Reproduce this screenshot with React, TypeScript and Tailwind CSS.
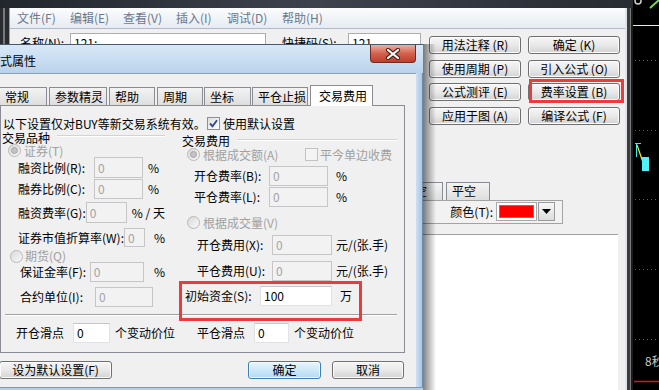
import React from 'react'

const txt = 'text-[12px] leading-[14px] whitespace-nowrap'
const tight = 'text-[12px] leading-[12px] whitespace-nowrap'

function Btn({ label, className = '', primary = false }: { label: string; className?: string; primary?: boolean }) {
  return (
    <div
      className={`flex h-[18px] items-center justify-center rounded-[3px] border text-black ${txt} ${
        primary
          ? 'border-[#3c7fb1] bg-linear-to-b from-[#e8f5fd] to-[#b2dbf4] shadow-[inset_0_0_0_1px_#f4fbff]'
          : 'border-[#707070] bg-linear-to-b from-[#f6f6f6] via-[#e9e9e9] to-[#d3d3d3] shadow-[inset_0_0_0_1px_#fbfbfb]'
      } ${className}`}
    >
      {label}
    </div>
  )
}

function Field({ value = '0', enabled = false, className = '' }: { value?: string; enabled?: boolean; className?: string }) {
  return (
    <div
      className={`flex h-full items-center border pl-[3px] ${txt} ${
        enabled ? 'border-[#dfe3e8] border-t-[#c3c7cc] bg-white text-black' : 'border-[#c6c6c6] bg-[#f2f2f2] text-[#a3a3a3]'
      } ${className}`}
    >
      {value}
    </div>
  )
}

function Radio({ checked = false }: { checked?: boolean }) {
  return (
    <span className="flex h-[13px] w-[13px] shrink-0 items-center justify-center rounded-full border border-[#b8b8b8] bg-linear-to-br from-[#d9d9d9] to-[#f9f9f9]">
      {checked && <span className="h-[7px] w-[7px] rounded-full border border-[#a5a5a5] bg-[#c4c4c4]" />}
    </span>
  )
}

function Check({ checked = false, disabled = false }: { checked?: boolean; disabled?: boolean }) {
  return (
    <span
      className={`flex h-[13px] w-[13px] shrink-0 items-center justify-center border ${
        disabled ? 'border-[#c2c2c2] bg-[#f4f4f4]' : 'border-[#8e8f8f] bg-linear-to-br from-[#dedede] to-white'
      }`}
    >
      {checked && (
        <svg width="9" height="9" viewBox="0 0 9 9">
          <path d="M1 4.5 L3.5 7.2 L8 1.2" fill="none" stroke="#2f4a8f" strokeWidth="1.9" />
        </svg>
      )}
    </span>
  )
}

function Tab({ label, w, ml = 0, active = false }: { label: string; w: number; ml?: number; active?: boolean }) {
  return (
    <div
      style={{ width: w, marginLeft: ml }}
      className={`flex items-center border border-b-0 border-[#898c95] text-black ${txt} ${
        active ? 'relative z-10 mb-[-1px] h-[21px] bg-white pl-[8px]' : 'h-[18px] bg-linear-to-b from-[#f3f3f3] to-[#dedede] pl-[5px]'
      }`}
    >
      {label}
    </div>
  )
}

function BackWindow() {
  const menu: [string, number][] = [
    ['文件(F)', 53],
    ['编辑(E)', 53],
    ['查看(V)', 53],
    ['插入(I)', 51],
    ['调试(D)', 55],
    ['帮助(H)', 60],
  ]
  const buttons = ['用法注释 (R)', '确定 (K)', '使用周期 (P)', '引入公式 (O)', '公式测评 (E)', '费率设置 (B)', '应用于图 (A)', '编译公式 (F)']
  return (
    <div className="flex h-[390px] w-[633px] shrink-0 flex-col">
      <div className="h-[8px] bg-linear-to-r from-[#22262d] via-[#3d434d] to-[#272b32]" />
      <div className="flex flex-1">
        <div className="flex w-[10px] bg-[#2a2c30]">
          <div className="ml-[3px] w-[2px] bg-[#777a7f]" />
          <div className="ml-[4px] w-[1px] bg-[#9aa0a8]" />
        </div>
        <div className="flex w-[615px] flex-col bg-[#f0f0f0]">
          <div className="flex h-[21px] items-center border-b border-[#b3bac5] bg-linear-to-b from-[#fbfcfd] to-[#e6ecf3] pl-[7px] text-[#6b778d]">
            {menu.map(([m, w]) => (
              <div key={m} style={{ width: w }} className={txt}>
                {m}
              </div>
            ))}
          </div>
          <div className="flex pt-[4px]">
            <div className="flex w-[411px] items-start">
              <div className={`w-[60px] pl-[10px] pt-[3px] ${txt}`}>名称(N):</div>
              <div className={`h-[20px] w-[196px] border border-[#abadb3] bg-white pl-[3px] pt-[2px] ${txt}`}>121:</div>
              <div className={`ml-[16px] w-[66px] pt-[3px] ${txt}`}>快捷码(S):</div>
              <div className={`h-[20px] w-[73px] border border-[#abadb3] bg-white pl-[3px] pt-[2px] ${txt}`}>121</div>
            </div>
            <div className="ml-[8px] mt-[3px] grid grid-cols-[92px_92px] gap-x-[7px] gap-y-[5.67px]">
              {buttons.map((b) =>
                b === '费率设置 (B)' ? (
                  <div key={b} className="relative">
                    <Btn label={b} />
                    <div className="absolute left-[1px] top-[-4px] h-[24px] w-[95px] border-[3px] border-[#ec3b3b]" />
                  </div>
                ) : (
                  <Btn key={b} label={b} />
                )
              )}
            </div>
          </div>
          <div className="mt-[57px] flex items-end pl-[387px]">
            <Tab label="开空" w={46} />
            <Tab label="平空" w={44} ml={3} />
          </div>
          <div className="ml-[380px] flex h-[24px] w-[173px] items-center justify-end border border-[#a3a3a3] bg-[#f2f2f2] pr-[7px]">
            <div className={`mr-[3px] ${txt}`}>颜色(T):</div>
            <div className="h-[19px] w-[41px] border border-[#a9a9a9] bg-white p-[2px]">
              <div className="h-full w-full border border-[#7a7a7a] bg-[#ff0000]" />
            </div>
            <div className="ml-[1px] flex h-[19px] w-[17px] items-center justify-center border border-[#9a9a9a] bg-linear-to-b from-[#f7f7f7] to-[#dcdcdc]">
              <svg width="9" height="5" viewBox="0 0 9 5">
                <path d="M0 0 H9 L4.5 5 Z" fill="#000" />
              </svg>
            </div>
          </div>
          <div className="mr-[7px] mt-[10px] flex-1 border-t border-[#a0a0a0] bg-white" />
        </div>
        <div className="flex w-[8px]">
          <div className="w-[2px] bg-[#dfe3ea]" />
          <div className="w-[3px] bg-[#3c3c3c]" />
          <div className="w-[1px] bg-[#7a7a7a]" />
          <div className="w-[2px] bg-[#1b1b1b]" />
        </div>
      </div>
    </div>
  )
}

function Chart() {
  const dots = [60, 130, 199, 269, 339]
  return (
    <svg width="26" height="390" className="block shrink-0">
      <rect width="26" height="390" fill="#000" />
      <circle cx="5" cy="1" r="3" fill="none" stroke="#d0d0d0" strokeWidth="1.5" />
      <line x1="17" y1="8" x2="26" y2="0" stroke="#6fe04a" strokeWidth="2" />
      <line x1="0" y1="25.5" x2="26" y2="25.5" stroke="#e8e8e8" />
      {dots.map((y) => (
        <line key={y} x1="2" y1={y + 0.5} x2="25" y2={y + 0.5} stroke="#e02424" strokeDasharray="1 3" />
      ))}
      <path d="M2 143.5 H8 M3.5 143.5 V157" stroke="#3ee6f2" fill="none" />
      <line x1="4" y1="145" x2="13" y2="171" stroke="#f2f200" strokeWidth="1.2" />
      <rect x="9" y="157" width="7" height="14" fill="#4ff2f6" />
      <line x1="1" y1="381.5" x2="26" y2="381.5" stroke="#e01414" strokeWidth="1.5" />
      <text x="12" y="366" fill="#c8c8c8" fontSize="12" fontFamily="'Noto Sans CJK SC', sans-serif">
        8秒
      </text>
    </svg>
  )
}

function Dialog() {
  return (
    <div className="absolute left-0 top-[44px] flex h-[346px] w-[423px] flex-col">
      <div className="flex h-[29px] items-start border-t border-[#4a5868] bg-linear-to-b from-[#d8e8f7] via-[#cadef2] to-[#b9d2eb]">
        <div className={`ml-[-12px] mt-[9px] text-black ${txt}`}>公式属性</div>
        <div className="ml-auto mr-[7px] flex h-[18px] w-[46px] items-center justify-center rounded-b-[4px] border border-t-0 border-[#6e2b22] bg-linear-to-b from-[#eab0a2] via-[#d3614d] to-[#bf3d2b]">
          <svg width="16" height="12" viewBox="0 0 16 12">
            <path d="M3 2 L13 10 M13 2 L3 10" stroke="#4a1f18" strokeWidth="4.2" strokeLinecap="round" />
            <path d="M3 2 L13 10 M13 2 L3 10" stroke="#fff" strokeWidth="2.2" strokeLinecap="round" />
          </svg>
        </div>
      </div>
      <div className="flex flex-1">
        <div className="flex w-[416px] flex-col border-t border-[#8aa0b8] bg-[#f0f0f0]">
          <div className="flex h-[31px] items-end pt-[11px]">
            <Tab label="常规" w={48} ml={-1} />
            <Tab label="参数精灵" w={58} ml={2} />
            <Tab label="帮助" w={46} ml={2} />
            <Tab label="周期" w={46} ml={2} />
            <Tab label="坐标" w={47} ml={1} />
            <Tab label="平仓止损" w={56} ml={1} />
            <Tab label="交易费用" w={63} ml={2} active />
          </div>
          <div className="flex h-[248px] w-[405px] flex-col border border-[#898c95] bg-[#f0f0f0] text-black">
            <div className="mt-[11px] flex h-[13px] items-center pl-[2px]">
              <div className={`w-[204px] ${tight}`}>以下设置仅对BUY等新交易系统有效。</div>
              <Check checked />
              <div className={`ml-[3px] ${tight}`}>使用默认设置</div>
            </div>
            <div className="flex items-start">
              <div className="flex w-[164px] flex-col">
                <div className="mt-[1px] flex h-[13px] items-center pl-[1px]">
                  <div className={tight}>交易品种</div>
                  <div className="ml-[7px] mb-[4px] h-[2px] flex-1 border-t border-b border-t-[#cfd4d9] border-b-white" />
                </div>
                <div className="flex h-[13px] items-end pl-[7px] text-[#a0a0a0]">
                  <Radio checked />
                  <div className={`ml-[3px] ${tight}`}>证券(T)</div>
                </div>
                <div className="flex h-[21px] items-center pl-[17px]">
                  <div className={`w-[76px] ${txt}`}>融资比例(R):</div>
                  <Field className="w-[49px]" />
                  <div className={`ml-[5px] ${txt}`}>%</div>
                </div>
                <div className="mt-[1px] flex h-[20px] items-center pl-[17px]">
                  <div className={`w-[76px] ${txt}`}>融券比例(C):</div>
                  <Field className="w-[49px]" />
                  <div className={`ml-[5px] ${txt}`}>%</div>
                </div>
                <div className="mt-[3px] flex h-[21px] items-center pl-[17px]">
                  <div className={`w-[76px] ${txt}`}>融资费率(G):</div>
                  <Field className="w-[49px]" />
                  <div className={`ml-[5px] ${txt}`}>% / 天</div>
                </div>
                <div className="mt-[5px] flex h-[19px] items-center pl-[17px]">
                  <div className={`w-[112px] ${txt}`}>证券市值折算率(W):</div>
                  <Field className="w-[38px]" />
                  <div className={`ml-[9px] ${txt}`}>%</div>
                </div>
                <div className="mt-[3px] flex h-[12px] items-center pl-[9px] text-[#a0a0a0]">
                  <Radio />
                  <div className={`ml-[2px] ${tight}`}>期货(Q)</div>
                </div>
                <div className="flex h-[20px] items-center pl-[19px]">
                  <div className={`w-[75px] ${txt}`}>保证金率(F):</div>
                  <Field className="w-[58px]" />
                  <div className={`ml-[10px] ${txt}`}>%</div>
                </div>
                <div className="mt-[5px] flex h-[20px] items-center pl-[19px]">
                  <div className={`w-[75px] ${txt}`}>合约单位(I):</div>
                  <Field className="w-[58px]" />
                </div>
              </div>
              <div className="flex w-[232px] flex-col">
                <div className="mt-[5px] flex h-[12px] items-start pl-[17px]">
                  <div className={tight}>交易费用</div>
                  <div className="ml-[7px] mt-[4px] h-[2px] flex-1 border-t border-b border-t-[#cfd4d9] border-b-white" />
                </div>
                <div className="mt-[1px] flex h-[13px] items-center pl-[22px] text-[#a0a0a0]">
                  <div className="flex w-[118px] items-center">
                    <Radio checked />
                    <div className={`ml-[3px] ${tight}`}>根据成交额(A)</div>
                  </div>
                  <Check disabled />
                  <div className={`ml-[2px] ${tight}`}>平今单边收费</div>
                </div>
                <div className="mt-[5px] flex h-[20px] items-center pl-[29px]">
                  <div className={`w-[75px] ${txt}`}>开仓费率(B):</div>
                  <Field className="w-[59px]" />
                  <div className={`ml-[8px] ${txt}`}>%</div>
                </div>
                <div className="mt-[1px] flex h-[20px] items-center pl-[29px]">
                  <div className={`w-[75px] ${txt}`}>平仓费率(L):</div>
                  <Field className="w-[59px]" />
                  <div className={`ml-[8px] ${txt}`}>%</div>
                </div>
                <div className="mt-[9px] flex h-[13px] items-center pl-[22px] text-[#a0a0a0]">
                  <Radio />
                  <div className={`ml-[3px] ${tight}`}>根据成交量(V)</div>
                </div>
                <div className="mt-[6px] flex h-[20px] items-center pl-[32px]">
                  <div className={`w-[75px] ${txt}`}>开仓费用(X):</div>
                  <Field className="w-[60px]" />
                  <div className={`ml-[4px] ${txt}`}>元/(张.手)</div>
                </div>
                <div className="mt-[6px] flex h-[20px] items-center pl-[32px]">
                  <div className={`w-[75px] ${txt}`}>平仓费用(U):</div>
                  <Field className="w-[60px]" />
                  <div className={`ml-[4px] ${txt}`}>元/(张.手)</div>
                </div>
                <div className="relative mt-[5px] flex h-[20px] items-center pl-[20px]">
                  <div className={`w-[75px] ${txt}`}>初始资金(S):</div>
                  <Field value="100" enabled className="w-[72px]" />
                  <div className={`ml-[8px] ${txt}`}>万</div>
                  <div className="absolute left-[14px] top-[-5px] z-10 h-[40px] w-[183px] border-[3px] border-[#ec3b3b]" />
                </div>
              </div>
            </div>
            <div className="ml-[4px] mt-[7px] h-[2px] w-[392px] border-t border-b border-t-[#a0a0a0] border-b-white" />
            <div className="mt-[7px] flex h-[20px] items-center pl-[15px]">
              <div className="flex h-full w-[181px] items-center">
                <div className={`w-[57px] ${txt}`}>开仓滑点</div>
                <Field value="0" enabled className="w-[37px]" />
                <div className={`ml-[5px] ${txt}`}>个变动价位</div>
              </div>
              <div className={`w-[57px] ${txt}`}>平仓滑点</div>
              <Field value="0" enabled className="w-[35px]" />
              <div className={`ml-[5px] ${txt}`}>个变动价位</div>
            </div>
          </div>
          <div className="mt-[8px] flex">
            <Btn label="设为默认设置(F)" className="ml-[-1px] w-[113px]" />
            <Btn label="确定" primary className="ml-[136px] w-[73px]" />
            <Btn label="取消" className="ml-[11px] w-[72px]" />
          </div>
        </div>
        <div className="w-[7px] border-r border-[#6f8aa8] bg-linear-to-r from-[#cde0f3] to-[#a9c6e4]" />
      </div>
      <div className="h-[3px] border-t border-[#7f97b2] bg-[#b5cfe9]" />
    </div>
  )
}

export default function App() {
  return (
    <div className="relative flex h-[390px] w-[659px] overflow-hidden bg-black font-['Noto_Sans_CJK_SC',sans-serif]">
      <BackWindow />
      <Chart />
      <div className="absolute left-[423px] top-[44px] h-[346px] w-[13px] bg-linear-to-r from-black/50 to-transparent" />
      <Dialog />
    </div>
  )
}
